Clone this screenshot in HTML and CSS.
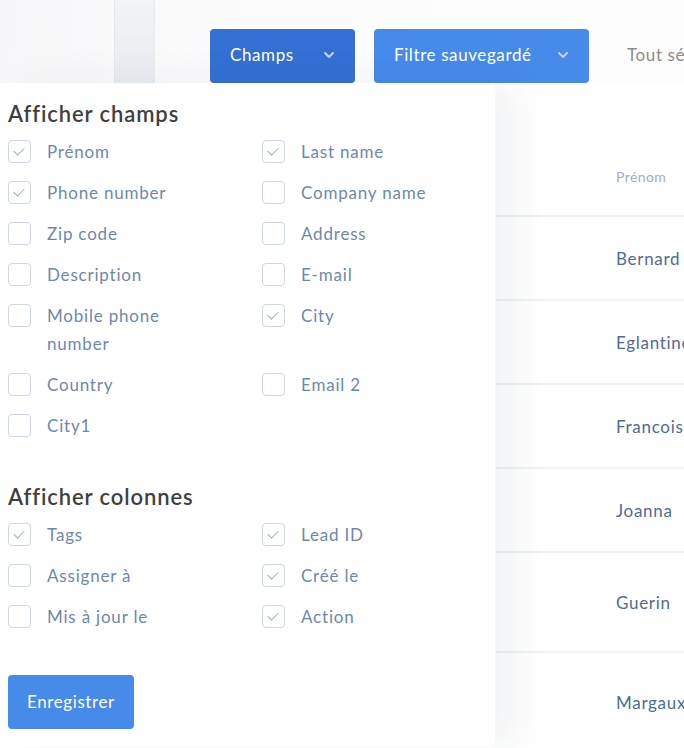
FILE: index.html
```html
<!DOCTYPE html>
<html lang="fr">
<head>
    <meta charset="UTF-8">
    <meta name="viewport" content="width=device-width, initial-scale=1.0">
    <title>Leads</title>
    <link rel="stylesheet" href="styles.css">
</head>
<body>
    <div class="toolbar">
        <div class="toolbar-strip"></div>
        <div class="toolbar-actions">
            <button class="btn btn-dark">Champs
                <svg class="chevron" viewBox="0 0 10 6"><path d="M1 1l4 4 4-4"/></svg>
            </button>
            <button class="btn btn-light">Filtre sauvegardé
                <svg class="chevron" viewBox="0 0 10 6"><path d="M1 1l4 4 4-4"/></svg>
            </button>
            <span class="select-all">Tout sélectionner</span>
        </div>
    </div>

    <div class="content">
        <div class="table">
            <div class="row head"><span class="cell">Prénom</span></div>
            <div class="row"><span class="cell">Bernard</span></div>
            <div class="row"><span class="cell">Eglantine</span></div>
            <div class="row"><span class="cell">Francoise</span></div>
            <div class="row"><span class="cell">Joanna</span></div>
            <div class="row tall"><span class="cell">Guerin</span></div>
            <div class="row tall"><span class="cell">Margaux</span></div>
        </div>

        <div class="dropdown">
            <h2>Afficher champs</h2>
            <div class="options">
                <label class="option"><span class="box checked"></span>Prénom</label>
                <label class="option"><span class="box checked"></span>Last name</label>
                <label class="option"><span class="box checked"></span>Phone number</label>
                <label class="option"><span class="box"></span>Company name</label>
                <label class="option"><span class="box"></span>Zip code</label>
                <label class="option"><span class="box"></span>Address</label>
                <label class="option"><span class="box"></span>Description</label>
                <label class="option"><span class="box"></span>E-mail</label>
                <label class="option"><span class="box"></span>Mobile phone number</label>
                <label class="option"><span class="box checked"></span>City</label>
                <label class="option"><span class="box"></span>Country</label>
                <label class="option"><span class="box"></span>Email 2</label>
                <label class="option"><span class="box"></span>City1</label>
            </div>

            <h2 class="second">Afficher colonnes</h2>
            <div class="options">
                <label class="option"><span class="box checked"></span>Tags</label>
                <label class="option"><span class="box checked"></span>Lead ID</label>
                <label class="option"><span class="box"></span>Assigner à</label>
                <label class="option"><span class="box checked"></span>Créé le</label>
                <label class="option"><span class="box"></span>Mis à jour le</label>
                <label class="option"><span class="box checked"></span>Action</label>
            </div>

            <button class="btn btn-light save">Enregistrer</button>
        </div>
    </div>
</body>
</html>
```

FILE: styles.css
```css
body {
    margin: 0;
    font-family: Lato, "Noto Sans", sans-serif;
    background: #fff;
    overflow: hidden;
    width: 684px;
    height: 748px;
}
.toolbar {
    height: 83px;
    position: relative;
    overflow: hidden;
    background: linear-gradient(100deg, #f7f7f9 0%, #fcfcfd 40%, #fdfdfe 100%);
}
.toolbar-strip {
    position: absolute;
    left: 114px;
    top: 0;
    width: 41px;
    height: 83px;
    background: linear-gradient(180deg, #f1f3f6 0%, #e9ebf0 100%);
    border-left: 1px solid #e3e6ec;
    border-right: 1px solid #e6e9ee;
    box-sizing: border-box;
}
.toolbar-actions {
    display: flex;
    align-items: center;
    gap: 19px;
    padding: 29px 0 0 210px;
    white-space: nowrap;
    overflow: hidden;
}
.btn {
    flex: none;
    border: none;
    border-radius: 4px;
    color: #fff;
    font-family: inherit;
    font-size: 17px;
    letter-spacing: 0.6px;
    height: 54px;
    padding: 0 20px 3px;
    display: flex;
    align-items: center;
    cursor: pointer;
}
.btn-dark {
    background: #346fd3;
    width: 145px;
}
.btn-light {
    background: #468aea;
}
.toolbar-actions .btn-light {
    width: 215px;
}
.chevron {
    width: 10px;
    height: 6px;
    margin-left: auto;
    margin-right: 1px;
    fill: none;
    stroke: #c3d4f2;
    stroke-width: 2;
    stroke-linecap: round;
    stroke-linejoin: round;
}
.select-all {
    color: #8b8b8b;
    font-size: 17px;
    letter-spacing: 0.6px;
    margin-left: 19px;
    padding-bottom: 3px;
}
.content {
    position: relative;
}
.table {
    padding-left: 496px;
    overflow: hidden;
}
.row {
    height: 84px;
    border-bottom: 2px solid #eff2f6;
    box-sizing: border-box;
    display: flex;
    align-items: center;
    padding-left: 120px;
    white-space: nowrap;
    overflow: hidden;
}
.row.head {
    height: 134px;
    padding-top: 54px;
}
.row.tall {
    height: 100px;
}
.cell {
    color: #4f6b92;
    font-size: 17px;
    letter-spacing: 0.7px;
}
.head .cell {
    color: #9eaec4;
    font-size: 14px;
    letter-spacing: 0.4px;
}
.dropdown {
    position: absolute;
    left: 0;
    top: 0;
    width: 495px;
    height: 664px;
    background: #fff;
    border-bottom-right-radius: 6px;
    box-shadow: 22px 0 40px rgba(40, 50, 90, 0.06);
    padding: 17px 0 0 8px;
    box-sizing: border-box;
}
.dropdown h2 {
    margin: 0 0 10px;
    font-size: 22px;
    font-weight: 600;
    letter-spacing: 0.9px;
    color: #3f3f41;
    line-height: 28px;
}
.dropdown h2.second {
    margin-top: 43px;
}
.options {
    display: grid;
    grid-template-columns: 254px 220px;
    row-gap: 13px;
}
.option {
    display: flex;
    align-items: flex-start;
    color: #6e88ab;
    font-size: 17px;
    letter-spacing: 0.8px;
    line-height: 28px;
    padding-right: 50px;
}
.option:nth-child(2n) {
    padding-right: 0;
}
.box {
    flex: none;
    width: 23px;
    height: 23px;
    border: 1px solid #cdd7e5;
    border-radius: 4px;
    box-sizing: border-box;
    margin: 2px 16px 0 0;
    position: relative;
}
.box.checked::after {
    content: "";
    position: absolute;
    left: 7px;
    top: 4px;
    width: 5px;
    height: 9px;
    border-right: 1.5px solid #9db0ca;
    border-bottom: 1.5px solid #9db0ca;
    transform: rotate(45deg);
}
.save {
    margin-top: 44px;
    width: 126px;
    height: 54px;
    padding: 0 19px 2px;
}
```
